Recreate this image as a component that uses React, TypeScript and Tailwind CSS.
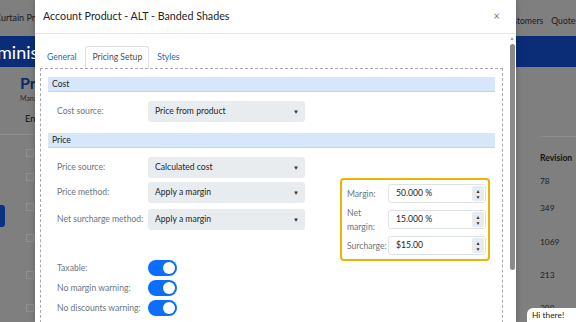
import React from 'react';

const font = "font-['Lato','Liberation_Sans',sans-serif]";

function Select({ value }: { value: string }) {
  return (
    <div className="flex h-[21px] w-[157px] items-center justify-between rounded-[3px] bg-[#e9ecef] pl-[7px] pr-[6px] text-[8.6px] text-[#212529]">
      <span>{value}</span>
      <span className="text-[6px] text-[#333]">▼</span>
    </div>
  );
}

function FormRow({ label, value, className = '' }: { label: string; value: string; className?: string }) {
  return (
    <div className={`flex items-center ${className}`}>
      <div className="w-[100px] whitespace-nowrap pl-[9px] text-[8.6px] text-[#6c757d]">{label}</div>
      <Select value={value} />
    </div>
  );
}

function SectionHeader({ title }: { title: string }) {
  return (
    <div className="h-[15px] border-b border-[#bcd2ee] bg-[#d7e6f8] pl-[4px] text-[8.6px] leading-[14px] text-[#212529]">
      {title}
    </div>
  );
}

function NumberInput({ value }: { value: string }) {
  return (
    <div className="flex h-[19px] w-[98px] items-center justify-between rounded-[3px] border border-[#dee2e6] bg-white pl-[7px] pr-[1px]">
      <span className="text-[8.6px] text-[#212529]">{value}</span>
      <div className="flex h-[15px] w-[12px] flex-col items-center justify-center rounded-[2px] bg-[#e9ecef] text-[5px] leading-[6px] text-[#333]">
        <span>▲</span>
        <span>▼</span>
      </div>
    </div>
  );
}

function Toggle({ label }: { label: string }) {
  return (
    <div className="flex h-[16px] items-center">
      <div className="w-[100px] whitespace-nowrap pl-[9px] text-[8.6px] text-[#6c757d]">{label}</div>
      <div className="flex h-[16px] w-[29px] items-center justify-end rounded-full bg-[#0d6efd] pr-[2px]">
        <div className="h-[12px] w-[12px] rounded-full bg-white" />
      </div>
    </div>
  );
}

function Background() {
  const rows = [
    { y: 'mt-[10px]', rev: '78' },
    { y: 'mt-[14px]', rev: '349' },
    { y: 'mt-[22px]', rev: '1069' },
    { y: 'mt-[20px]', rev: '213' },
    { y: 'mt-[21px]', rev: '398' },
  ];
  return (
    <div className="flex h-full flex-col">
      <div className="flex h-[36px] items-start justify-between">
        <span className="-ml-[5px] mt-[11px] text-[9px] text-[#1a1a1a]">Curtain Pro</span>
        <div className="-mr-[3px] mt-[15px] flex gap-[8px] text-[8.6px] text-[#1a1a1a]">
          <span>Customers</span>
          <span>Quotes</span>
        </div>
      </div>
      <div className="flex h-[31px] items-center bg-[#0b2d78]">
        <span className="-ml-[25px] text-[18px] leading-none text-white">Administration</span>
      </div>
      <div className="flex flex-1 justify-between">
        <div className="w-[120px]">
          <div className="ml-[20px] mt-[6px] text-[16px] font-bold leading-[20px] text-[#0a2a66]">Products</div>
          <div className="ml-[20px] text-[7px] text-[#2a2a2a]">Manage products</div>
          <div className="ml-[25px] mt-[8px] text-[9.5px] text-[#111]">Entries</div>
          <div className="mt-[8px] border-t border-[#8c8c8c]" />
          <div className="relative">
            <div className="absolute left-0 top-[56px] h-[22px] w-[5px] rounded-r-[3px] bg-[#0a3280]" />
            {[14, 16, 22, 23, 29, 25].map((m, i) => (
              <div key={i} className="ml-[26px] h-[8px] w-[8px] border border-[#8f8f8f]" style={{ marginTop: m }} />
            ))}
          </div>
        </div>
        <div className="w-[36px]">
          <div className="mt-[69px] h-0 border-t border-[#8c8c8c]" />
          <div className="mt-[15px] text-[8.6px] font-bold text-[#141414]">Revision</div>
          {rows.map((r) => (
            <div key={r.rev} className={`${r.y} text-[8.4px] text-[#1e1e1e]`}>{r.rev}</div>
          ))}
        </div>
      </div>
    </div>
  );
}

export default function App() {
  return (
    <div className={`relative h-[322px] w-[576px] overflow-hidden bg-[#7f7f7f] ${font}`}>
      <Background />

      {/* modal */}
      <div className="absolute left-[35px] top-0 flex h-[322px] w-[481px] flex-col bg-white shadow-[0_0_6px_rgba(0,0,0,0.25)]">
        <div className="flex h-[34px] shrink-0 items-center justify-between border-b border-[#e6e6e6] pl-[8px] pr-[16px]">
          <span className="text-[10.7px] text-[#212529]">Account Product - ALT - Banded Shades</span>
          <span className="text-[11px] text-[#777]">×</span>
        </div>
        <div className="flex flex-1">
          <div className="flex-1 px-[5px] pt-[12px]">
            <div className="flex h-[22px] items-stretch text-[8.6px]">
              <div className="flex items-center px-[7px] text-[#1c6cb4]">General</div>
              <div className="ml-[2px] flex items-center rounded-t-[3px] border border-b-0 border-[#dee2e6] px-[6px] text-[#495057]">Pricing Setup</div>
              <div className="flex items-center px-[8px] text-[#1c6cb4]">Styles</div>
            </div>
            <div className="h-[260px] border border-b-0 border-dashed border-[#a9a9a9] px-[7px] pt-[8px]">
              <SectionHeader title="Cost" />
              <FormRow className="mt-[9px]" label="Cost source:" value="Price from product" />
              <div className="mt-[11px]">
                <SectionHeader title="Price" />
              </div>
              <div className="mt-[9px] flex">
                <div>
                  <FormRow label="Price source:" value="Calculated cost" />
                  <FormRow className="mt-[4px]" label="Price method:" value="Apply a margin" />
                  <FormRow className="mt-[6px]" label="Net surcharge method:" value="Apply a margin" />
                </div>
                <div className="ml-[35px] mt-[21px] h-[83px] w-[150px] rounded-[4px] border-2 border-[#e8b500] pl-[5px] pr-[2px] pt-[4px]">
                  {[
                    { l: 'Margin:', v: '50.000 %' },
                    { l: 'Net margin:', v: '15.000 %' },
                    { l: 'Surcharge:', v: '$15.00' },
                  ].map((f, i) => (
                    <div key={f.l} className={`flex h-[19px] items-center justify-between ${i ? 'mt-[7px]' : ''}`}>
                      <span className="w-[40px] text-[8.6px] leading-[14px] text-[#6c757d]">{f.l}</span>
                      <NumberInput value={f.v} />
                    </div>
                  ))}
                </div>
              </div>
              <div className="-mt-[1px] flex flex-col gap-[4px]">
                <Toggle label="Taxable:" />
                <Toggle label="No margin warning:" />
                <Toggle label="No discounts warning:" />
              </div>
            </div>
          </div>
          {/* scrollbar */}
          <div className="flex w-[8px] flex-col items-center">
            <span className="mt-[1px] text-[5px] leading-[6px] text-[#9a9a9a]">▲</span>
            <div className="mt-[3px] h-[226px] w-[5px] rounded-full bg-[#8a8a8a]" />
            <div className="flex-1" />
            <span className="mb-[2px] text-[5px] leading-[6px] text-[#9a9a9a]">▼</span>
          </div>
        </div>
      </div>

      <div className="absolute bottom-0 right-0 h-[14px] w-[49px] rounded-tl-[6px] bg-white pl-[5px] pt-[1px] text-[8.4px] leading-[13px] text-[#222]">
        Hi there!
      </div>
    </div>
  );
}
